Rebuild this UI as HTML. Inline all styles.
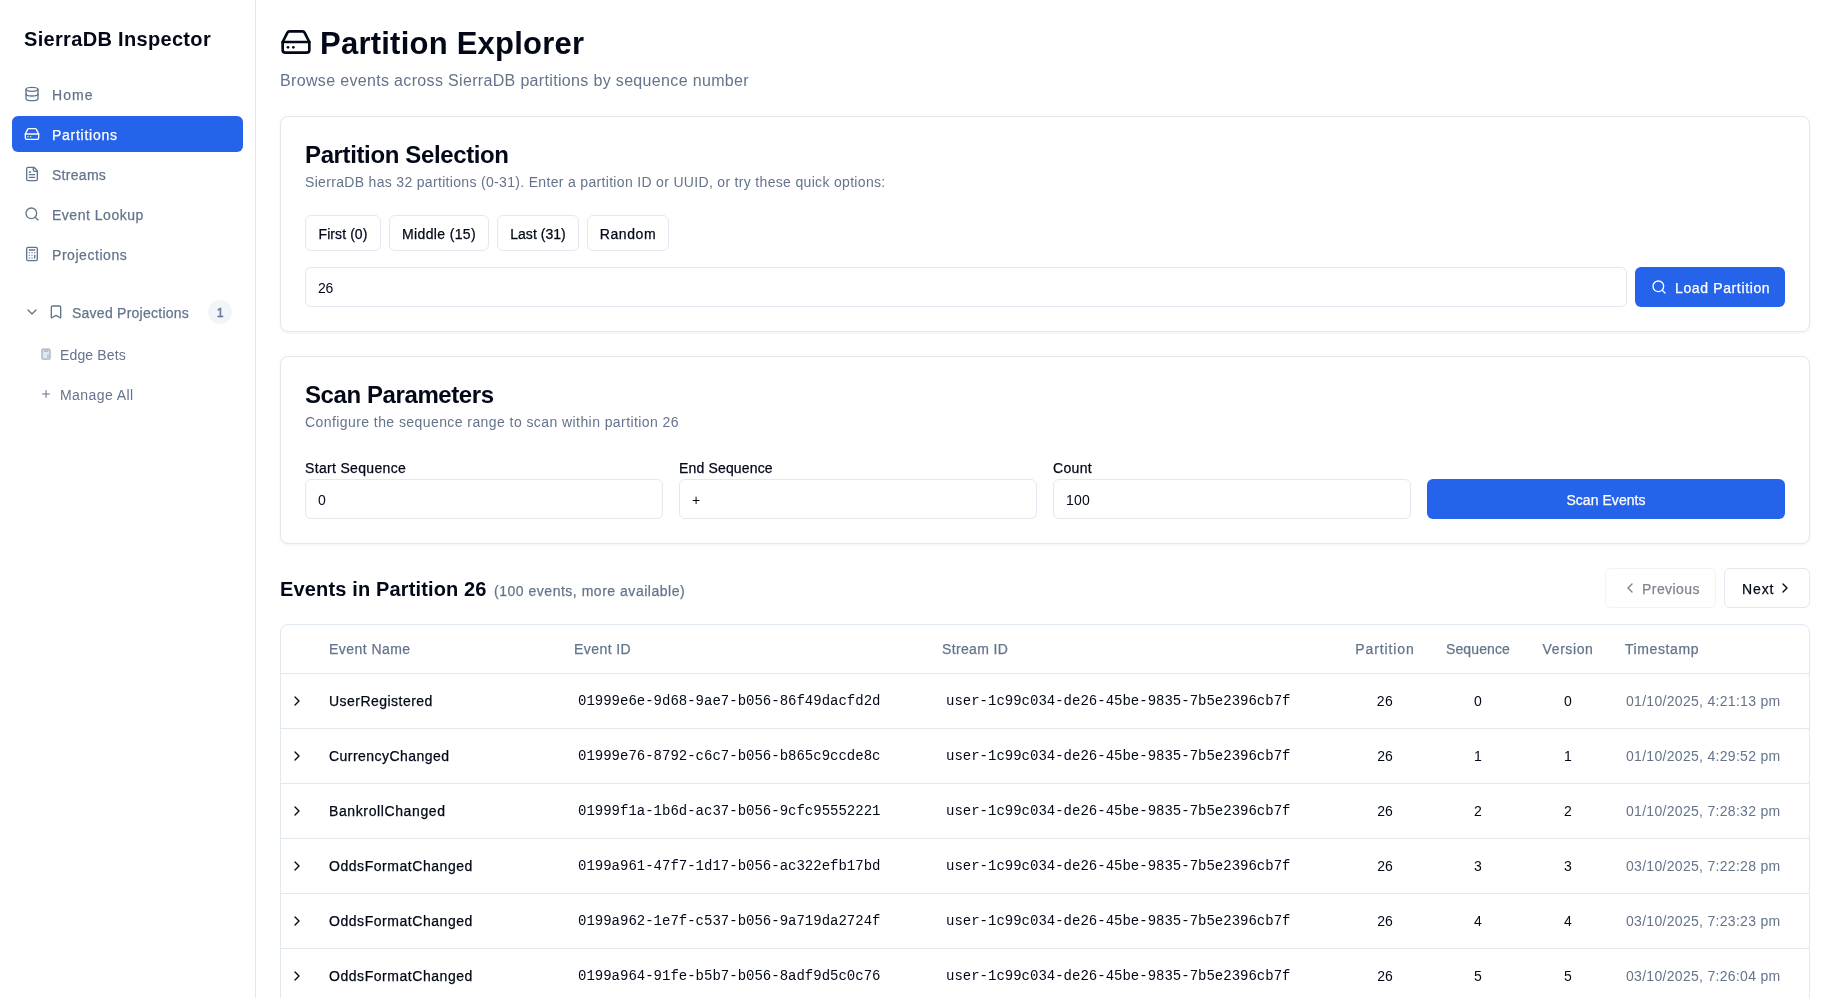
<!DOCTYPE html>
<html>
<head>
<meta charset="utf-8">
<style>
*{box-sizing:border-box;margin:0;padding:0}
html,body{width:1834px;height:998px;overflow:hidden;background:#fff;font-family:"Liberation Sans",sans-serif;color:#020817}
.abs{position:absolute}
svg{display:block}
.tx{position:absolute;white-space:nowrap;will-change:transform}
</style>
</head>
<body>
<div class="abs" style="left:255px;top:0px;width:1px;height:998px;background:#e2e8f0"></div>
<div class="tx" style="font-family:'Liberation Sans',sans-serif;font-size:20px;font-weight:700;color:#020817;line-height:28px;top:25.07px;letter-spacing:0.324px;left:24.00px;"><span id="brand">SierraDB Inspector</span></div>
<svg class="abs" style="left:24px;top:86px" width="16" height="16" viewBox="0 0 24 24" fill="none" stroke="#64748b" stroke-width="2" stroke-linecap="round" stroke-linejoin="round" ><ellipse cx="12" cy="5" rx="9" ry="3"/><path d="M3 5V19A9 3 0 0 0 21 19V5"/><path d="M3 12A9 3 0 0 0 21 12"/></svg>
<div class="tx" style="font-family:'Liberation Sans',sans-serif;font-size:14px;font-weight:400;color:#64748b;line-height:20px;top:85.15px;letter-spacing:1.067px;-webkit-text-stroke:0.25px #64748b;left:52.00px;"><span id="home">Home</span></div>
<div class="abs" style="left:12px;top:116px;width:231px;height:36px;background:#2563eb;border-radius:6px"></div>
<svg class="abs" style="left:24px;top:126px" width="16" height="16" viewBox="0 0 24 24" fill="none" stroke="#fff" stroke-width="2" stroke-linecap="round" stroke-linejoin="round" ><line x1="22" x2="2" y1="12" y2="12"/><path d="M5.45 5.11 2 12v6a2 2 0 0 0 2 2h16a2 2 0 0 0 2-2v-6l-3.45-6.89A2 2 0 0 0 16.76 4H7.24a2 2 0 0 0-1.79 1.11z"/><line x1="6" x2="6.01" y1="16" y2="16"/><line x1="10" x2="10.01" y1="16" y2="16"/></svg>
<div class="tx" style="font-family:'Liberation Sans',sans-serif;font-size:14px;font-weight:400;color:#fff;line-height:20px;top:125.15px;letter-spacing:0.733px;-webkit-text-stroke:0.25px #fff;left:52.00px;"><span id="partitions">Partitions</span></div>
<svg class="abs" style="left:24px;top:166px" width="16" height="16" viewBox="0 0 24 24" fill="none" stroke="#64748b" stroke-width="2" stroke-linecap="round" stroke-linejoin="round" ><path d="M15 2H6a2 2 0 0 0-2 2v16a2 2 0 0 0 2 2h12a2 2 0 0 0 2-2V7Z"/><path d="M14 2v4a2 2 0 0 0 2 2h4"/><path d="M10 9H8"/><path d="M16 13H8"/><path d="M16 17H8"/></svg>
<div class="tx" style="font-family:'Liberation Sans',sans-serif;font-size:14px;font-weight:400;color:#64748b;line-height:20px;top:165.15px;letter-spacing:0.283px;-webkit-text-stroke:0.25px #64748b;left:52.00px;"><span id="streams">Streams</span></div>
<svg class="abs" style="left:24px;top:206px" width="16" height="16" viewBox="0 0 24 24" fill="none" stroke="#64748b" stroke-width="2" stroke-linecap="round" stroke-linejoin="round" ><circle cx="11" cy="11" r="8"/><path d="m21 21-4.3-4.3"/></svg>
<div class="tx" style="font-family:'Liberation Sans',sans-serif;font-size:14px;font-weight:400;color:#64748b;line-height:20px;top:205.15px;letter-spacing:0.518px;-webkit-text-stroke:0.25px #64748b;left:52.00px;"><span id="lookup">Event Lookup</span></div>
<svg class="abs" style="left:24px;top:246px" width="16" height="16" viewBox="0 0 24 24" fill="none" stroke="#64748b" stroke-width="2" stroke-linecap="round" stroke-linejoin="round" ><rect width="16" height="20" x="4" y="2" rx="2"/><line x1="8" x2="16" y1="6" y2="6"/><line x1="16" x2="16" y1="14" y2="18"/><path d="M16 10h.01"/><path d="M12 10h.01"/><path d="M8 10h.01"/><path d="M12 14h.01"/><path d="M8 14h.01"/><path d="M12 18h.01"/><path d="M8 18h.01"/></svg>
<div class="tx" style="font-family:'Liberation Sans',sans-serif;font-size:14px;font-weight:400;color:#64748b;line-height:20px;top:245.15px;letter-spacing:0.550px;-webkit-text-stroke:0.25px #64748b;left:52.00px;"><span id="projections">Projections</span></div>
<svg class="abs" style="left:24px;top:304px" width="16" height="16" viewBox="0 0 24 24" fill="none" stroke="#64748b" stroke-width="2" stroke-linecap="round" stroke-linejoin="round" ><path d="m6 9 6 6 6-6"/></svg>
<svg class="abs" style="left:48px;top:304px" width="16" height="16" viewBox="0 0 24 24" fill="none" stroke="#64748b" stroke-width="2" stroke-linecap="round" stroke-linejoin="round" ><path d="m19 21-7-4-7 4V5a2 2 0 0 1 2-2h10a2 2 0 0 1 2 2v16z"/></svg>
<div class="tx" style="font-family:'Liberation Sans',sans-serif;font-size:14px;font-weight:400;color:#64748b;line-height:20px;top:303.15px;letter-spacing:0.250px;-webkit-text-stroke:0.25px #64748b;left:72.00px;"><span id="saved">Saved Projections</span></div>
<div class="abs" style="left:208px;top:300px;width:24px;height:24px;border-radius:12px;background:#f1f5f9;color:#64748b;font-size:12px;line-height:26px;text-align:center;font-weight:400;-webkit-text-stroke:.4px #64748b">1</div>
<svg class="abs" style="left:40px;top:348px" width="12" height="12" viewBox="0 0 24 24" fill="none" stroke="#a3adbd" stroke-width="2.5" stroke-linecap="round" stroke-linejoin="round" ><rect width="16" height="20" x="4" y="2" rx="2" fill="#e2e8f0"/><line x1="8" x2="16" y1="6" y2="6"/><line x1="16" x2="16" y1="14" y2="18"/></svg>
<div class="tx" style="font-family:'Liberation Sans',sans-serif;font-size:14px;font-weight:400;color:#64748b;line-height:20px;top:345.15px;letter-spacing:0.138px;left:60.00px;"><span id="edge">Edge Bets</span></div>
<svg class="abs" style="left:40px;top:388px" width="12" height="12" viewBox="0 0 24 24" fill="none" stroke="#64748b" stroke-width="2" stroke-linecap="round" stroke-linejoin="round" ><path d="M5 12h14"/><path d="M12 5v14"/></svg>
<div class="tx" style="font-family:'Liberation Sans',sans-serif;font-size:14px;font-weight:400;color:#64748b;line-height:20px;top:385.15px;letter-spacing:0.422px;left:60.00px;"><span id="manage">Manage All</span></div>
<svg class="abs" style="left:280px;top:26px" width="32" height="32" viewBox="0 0 24 24" fill="none" stroke="#020817" stroke-width="2" stroke-linecap="round" stroke-linejoin="round" ><line x1="22" x2="2" y1="12" y2="12"/><path d="M5.45 5.11 2 12v6a2 2 0 0 0 2 2h16a2 2 0 0 0 2-2v-6l-3.45-6.89A2 2 0 0 0 16.76 4H7.24a2 2 0 0 0-1.79 1.11z"/><line x1="6" x2="6.01" y1="16" y2="16"/><line x1="10" x2="10.01" y1="16" y2="16"/></svg>
<div class="tx" style="font-family:'Liberation Sans',sans-serif;font-size:31px;font-weight:700;color:#020817;line-height:43px;top:21.66px;letter-spacing:0.235px;left:320.00px;"><span id="title">Partition Explorer</span></div>
<div class="tx" style="font-family:'Liberation Sans',sans-serif;font-size:16px;font-weight:400;color:#64748b;line-height:22px;top:70.26px;letter-spacing:0.336px;left:280.00px;"><span id="subtitle">Browse events across SierraDB partitions by sequence number</span></div>
<div class="abs" style="left:280px;top:116px;width:1530px;height:216px;border:1px solid #e2e8f0;border-radius:8px;background:#fff;box-shadow:0 1px 3px 0 rgba(0,0,0,.06)"></div>
<div class="tx" style="font-family:'Liberation Sans',sans-serif;font-size:24px;font-weight:700;color:#020817;line-height:34px;top:137.88px;letter-spacing:-0.372px;left:305.00px;"><span id="h2a">Partition Selection</span></div>
<div class="tx" style="font-family:'Liberation Sans',sans-serif;font-size:14px;font-weight:400;color:#64748b;line-height:20px;top:172.25px;letter-spacing:0.322px;left:305.00px;"><span id="desc1">SierraDB has 32 partitions (0-31). Enter a partition ID or UUID, or try these quick options:</span></div>
<div class="abs" style="left:305px;top:215px;width:76px;height:36px;border:1px solid #e2e8f0;border-radius:6px;background:#fff"></div>
<div class="tx" style="font-family:'Liberation Sans',sans-serif;font-size:14px;font-weight:400;color:#020817;line-height:20px;top:224.15px;letter-spacing:0.087px;-webkit-text-stroke:0.25px #020817;left:285.04px;width:116px;text-align:center;"><span id="b1">First (0)</span></div>
<div class="abs" style="left:389px;top:215px;width:100px;height:36px;border:1px solid #e2e8f0;border-radius:6px;background:#fff"></div>
<div class="tx" style="font-family:'Liberation Sans',sans-serif;font-size:14px;font-weight:400;color:#020817;line-height:20px;top:224.15px;letter-spacing:0.350px;-webkit-text-stroke:0.25px #020817;left:369.18px;width:140px;text-align:center;"><span id="b2">Middle (15)</span></div>
<div class="abs" style="left:497px;top:215px;width:82px;height:36px;border:1px solid #e2e8f0;border-radius:6px;background:#fff"></div>
<div class="tx" style="font-family:'Liberation Sans',sans-serif;font-size:14px;font-weight:400;color:#020817;line-height:20px;top:224.15px;letter-spacing:0.038px;-webkit-text-stroke:0.25px #020817;left:477.02px;width:122px;text-align:center;"><span id="b3">Last (31)</span></div>
<div class="abs" style="left:587px;top:215px;width:82px;height:36px;border:1px solid #e2e8f0;border-radius:6px;background:#fff"></div>
<div class="tx" style="font-family:'Liberation Sans',sans-serif;font-size:14px;font-weight:400;color:#020817;line-height:20px;top:224.15px;letter-spacing:0.580px;-webkit-text-stroke:0.25px #020817;left:567.29px;width:122px;text-align:center;"><span id="b4">Random</span></div>
<div class="abs" style="left:305px;top:267px;width:1322px;height:40px;border:1px solid #e2e8f0;border-radius:6px;background:#fff"></div>
<div class="tx" style="font-family:'Liberation Sans',sans-serif;font-size:14px;font-weight:400;color:#020817;line-height:20px;top:278.05px;letter-spacing:-0.400px;left:318.00px;"><span id="inp26">26</span></div>
<div class="abs" style="left:1635px;top:267px;width:150px;height:40px;background:#2563eb;border-radius:6px"></div>
<svg class="abs" style="left:1651px;top:279px" width="16" height="16" viewBox="0 0 24 24" fill="none" stroke="#fff" stroke-width="2" stroke-linecap="round" stroke-linejoin="round" ><circle cx="11" cy="11" r="8"/><path d="m21 21-4.3-4.3"/></svg>
<div class="tx" style="font-family:'Liberation Sans',sans-serif;font-size:14px;font-weight:400;color:#fff;line-height:20px;top:278.25px;letter-spacing:0.631px;-webkit-text-stroke:0.25px #fff;left:1675.00px;"><span id="load">Load Partition</span></div>
<div class="abs" style="left:280px;top:356px;width:1530px;height:188px;border:1px solid #e2e8f0;border-radius:8px;background:#fff;box-shadow:0 1px 3px 0 rgba(0,0,0,.06)"></div>
<div class="tx" style="font-family:'Liberation Sans',sans-serif;font-size:24px;font-weight:700;color:#020817;line-height:34px;top:378.08px;letter-spacing:-0.407px;left:305.00px;"><span id="h2b">Scan Parameters</span></div>
<div class="tx" style="font-family:'Liberation Sans',sans-serif;font-size:14px;font-weight:400;color:#64748b;line-height:20px;top:412.35px;letter-spacing:0.425px;left:305.00px;"><span id="desc2">Configure the sequence range to scan within partition 26</span></div>
<div class="tx" style="font-family:'Liberation Sans',sans-serif;font-size:14px;font-weight:400;color:#020817;line-height:20px;top:458.35px;letter-spacing:0.331px;-webkit-text-stroke:0.25px #020817;left:305.00px;"><span id="l1">Start Sequence</span></div>
<div class="tx" style="font-family:'Liberation Sans',sans-serif;font-size:14px;font-weight:400;color:#020817;line-height:20px;top:458.35px;letter-spacing:0.164px;-webkit-text-stroke:0.25px #020817;left:679.00px;"><span id="l2">End Sequence</span></div>
<div class="tx" style="font-family:'Liberation Sans',sans-serif;font-size:14px;font-weight:400;color:#020817;line-height:20px;top:458.35px;letter-spacing:0.325px;-webkit-text-stroke:0.25px #020817;left:1053.00px;"><span id="l3">Count</span></div>
<div class="abs" style="left:305px;top:479px;width:358px;height:40px;border:1px solid #e2e8f0;border-radius:6px;background:#fff"></div>
<div class="tx" style="font-family:'Liberation Sans',sans-serif;font-size:14px;font-weight:400;color:#020817;line-height:20px;top:490.45px;left:318.00px;"><span id="v0">0</span></div>
<div class="abs" style="left:679px;top:479px;width:358px;height:40px;border:1px solid #e2e8f0;border-radius:6px;background:#fff"></div>
<div class="tx" style="font-family:'Liberation Sans',sans-serif;font-size:14px;font-weight:400;color:#020817;line-height:20px;top:490.45px;left:692.00px;"><span id="vplus">+</span></div>
<div class="abs" style="left:1053px;top:479px;width:358px;height:40px;border:1px solid #e2e8f0;border-radius:6px;background:#fff"></div>
<div class="tx" style="font-family:'Liberation Sans',sans-serif;font-size:14px;font-weight:400;color:#020817;line-height:20px;top:490.45px;letter-spacing:0.200px;left:1066.00px;"><span id="v100">100</span></div>
<div class="abs" style="left:1427px;top:479px;width:358px;height:40px;background:#2563eb;border-radius:6px"></div>
<div class="tx" style="font-family:'Liberation Sans',sans-serif;font-size:14px;font-weight:400;color:#fff;line-height:20px;top:490.15px;letter-spacing:0.050px;-webkit-text-stroke:0.25px #fff;left:1456.03px;width:300px;text-align:center;"><span id="scan">Scan Events</span></div>
<div class="tx" style="font-family:'Liberation Sans',sans-serif;font-size:20px;font-weight:700;color:#020817;line-height:28px;top:574.97px;letter-spacing:0.148px;left:280.00px;"><span id="events">Events in Partition 26</span></div>
<div class="tx" style="font-family:'Liberation Sans',sans-serif;font-size:14px;font-weight:400;color:#64748b;line-height:20px;top:581.15px;letter-spacing:0.519px;-webkit-text-stroke:0.25px #64748b;left:494.00px;"><span id="evcount">(100 events, more available)</span></div>
<div class="abs" style="left:1605px;top:568px;width:111px;height:40px;opacity:.5">
<div class="abs" style="left:0px;top:0px;width:111px;height:40px;border:1px solid #e2e8f0;border-radius:6px;background:#fff"></div>
<svg class="abs" style="left:17px;top:12px" width="16" height="16" viewBox="0 0 24 24" fill="none" stroke="#020817" stroke-width="2" stroke-linecap="round" stroke-linejoin="round" ><path d="m15 18-6-6 6-6"/></svg>
</div>
<div class="tx" style="font-family:'Liberation Sans',sans-serif;font-size:14px;font-weight:400;color:#808490;line-height:20px;top:579.35px;letter-spacing:0.443px;-webkit-text-stroke:0.25px #808490;left:1641.50px;"><span id="prev">Previous</span></div>
<div class="abs" style="left:1724px;top:568px;width:86px;height:40px;border:1px solid #e2e8f0;border-radius:6px;background:#fff"></div>
<div class="tx" style="font-family:'Liberation Sans',sans-serif;font-size:14px;font-weight:400;color:#020817;line-height:20px;top:579.35px;letter-spacing:0.900px;-webkit-text-stroke:0.25px #020817;left:1742.00px;"><span id="next">Next</span></div>
<svg class="abs" style="left:1777px;top:580px" width="16" height="16" viewBox="0 0 24 24" fill="none" stroke="#020817" stroke-width="2" stroke-linecap="round" stroke-linejoin="round" ><path d="m9 18 6-6-6-6"/></svg>
<div class="abs" style="left:280px;top:624px;width:1530px;height:400px;border:1px solid #e2e8f0;border-radius:8px;background:#fff"></div>
<div class="tx" style="font-family:'Liberation Sans',sans-serif;font-size:14px;font-weight:400;color:#64748b;line-height:20px;top:639.15px;letter-spacing:0.456px;-webkit-text-stroke:0.25px #64748b;left:329.00px;"><span id="th_name">Event Name</span></div>
<div class="tx" style="font-family:'Liberation Sans',sans-serif;font-size:14px;font-weight:400;color:#64748b;line-height:20px;top:639.15px;letter-spacing:0.429px;-webkit-text-stroke:0.25px #64748b;left:574.00px;"><span id="th_id">Event ID</span></div>
<div class="tx" style="font-family:'Liberation Sans',sans-serif;font-size:14px;font-weight:400;color:#64748b;line-height:20px;top:639.15px;letter-spacing:0.350px;-webkit-text-stroke:0.25px #64748b;left:942.00px;"><span id="th_stream">Stream ID</span></div>
<div class="tx" style="font-family:'Liberation Sans',sans-serif;font-size:14px;font-weight:400;color:#64748b;line-height:20px;top:639.15px;letter-spacing:0.912px;-webkit-text-stroke:0.25px #64748b;left:1325.36px;width:120px;text-align:center;"><span id="th_part">Partition</span></div>
<div class="tx" style="font-family:'Liberation Sans',sans-serif;font-size:14px;font-weight:400;color:#64748b;line-height:20px;top:639.15px;letter-spacing:0.114px;-webkit-text-stroke:0.25px #64748b;left:1418.46px;width:120px;text-align:center;"><span id="th_seq">Sequence</span></div>
<div class="tx" style="font-family:'Liberation Sans',sans-serif;font-size:14px;font-weight:400;color:#64748b;line-height:20px;top:639.15px;letter-spacing:0.583px;-webkit-text-stroke:0.25px #64748b;left:1508.09px;width:120px;text-align:center;"><span id="th_ver">Version</span></div>
<div class="tx" style="font-family:'Liberation Sans',sans-serif;font-size:14px;font-weight:400;color:#64748b;line-height:20px;top:639.15px;letter-spacing:0.588px;-webkit-text-stroke:0.25px #64748b;left:1625.00px;"><span id="th_ts">Timestamp</span></div>
<div class="abs" style="left:281px;top:673px;width:1528px;height:1px;background:#e2e8f0"></div>
<svg class="abs" style="left:289px;top:693px" width="16" height="16" viewBox="0 0 24 24" fill="none" stroke="#020817" stroke-width="2" stroke-linecap="round" stroke-linejoin="round" ><path d="m9 18 6-6-6-6"/></svg>
<div class="tx" style="font-family:'Liberation Sans',sans-serif;font-size:14px;font-weight:400;color:#020817;line-height:20px;top:690.85px;letter-spacing:0.469px;-webkit-text-stroke:0.25px #020817;left:329.00px;"><span id="r0name">UserRegistered</span></div>
<div class="tx" style="font-family:'Liberation Mono',monospace;font-size:14px;font-weight:400;color:#020817;line-height:20px;top:690.85px;left:578.00px;"><span id="r0id">01999e6e-9d68-9ae7-b056-86f49dacfd2d</span></div>
<div class="tx" style="font-family:'Liberation Mono',monospace;font-size:14px;font-weight:400;color:#020817;line-height:20px;top:690.85px;left:946.00px;"><span id="r0sid">user-1c99c034-de26-45be-9835-7b5e2396cb7f</span></div>
<div class="tx" style="font-family:'Liberation Sans',sans-serif;font-size:14px;font-weight:400;color:#020817;line-height:20px;top:690.85px;letter-spacing:0.500px;left:1324.75px;width:120px;text-align:center;"><span id="r0p">26</span></div>
<div class="tx" style="font-family:'Liberation Sans',sans-serif;font-size:14px;font-weight:400;color:#020817;line-height:20px;top:690.85px;left:1418.30px;width:120px;text-align:center;"><span id="r0s">0</span></div>
<div class="tx" style="font-family:'Liberation Sans',sans-serif;font-size:14px;font-weight:400;color:#020817;line-height:20px;top:690.85px;left:1507.80px;width:120px;text-align:center;"><span id="r0v">0</span></div>
<div class="tx" style="font-family:'Liberation Sans',sans-serif;font-size:14px;font-weight:400;color:#64748b;line-height:20px;top:690.85px;letter-spacing:0.300px;left:1625.50px;"><span id="r0ts">01/10/2025, 4:21:13 pm</span></div>
<div class="abs" style="left:281px;top:728px;width:1528px;height:1px;background:#e2e8f0"></div>
<svg class="abs" style="left:289px;top:748px" width="16" height="16" viewBox="0 0 24 24" fill="none" stroke="#020817" stroke-width="2" stroke-linecap="round" stroke-linejoin="round" ><path d="m9 18 6-6-6-6"/></svg>
<div class="tx" style="font-family:'Liberation Sans',sans-serif;font-size:14px;font-weight:400;color:#020817;line-height:20px;top:745.85px;letter-spacing:0.457px;-webkit-text-stroke:0.25px #020817;left:329.00px;"><span id="r1name">CurrencyChanged</span></div>
<div class="tx" style="font-family:'Liberation Mono',monospace;font-size:14px;font-weight:400;color:#020817;line-height:20px;top:745.85px;left:578.00px;"><span id="r1id">01999e76-8792-c6c7-b056-b865c9ccde8c</span></div>
<div class="tx" style="font-family:'Liberation Mono',monospace;font-size:14px;font-weight:400;color:#020817;line-height:20px;top:745.85px;left:946.00px;"><span id="r1sid">user-1c99c034-de26-45be-9835-7b5e2396cb7f</span></div>
<div class="tx" style="font-family:'Liberation Sans',sans-serif;font-size:14px;font-weight:400;color:#020817;line-height:20px;top:745.85px;left:1324.50px;width:120px;text-align:center;"><span id="r1p">26</span></div>
<div class="tx" style="font-family:'Liberation Sans',sans-serif;font-size:14px;font-weight:400;color:#020817;line-height:20px;top:745.85px;left:1418.30px;width:120px;text-align:center;"><span id="r1s">1</span></div>
<div class="tx" style="font-family:'Liberation Sans',sans-serif;font-size:14px;font-weight:400;color:#020817;line-height:20px;top:745.85px;left:1507.80px;width:120px;text-align:center;"><span id="r1v">1</span></div>
<div class="tx" style="font-family:'Liberation Sans',sans-serif;font-size:14px;font-weight:400;color:#64748b;line-height:20px;top:745.85px;letter-spacing:0.300px;left:1625.50px;"><span id="r1ts">01/10/2025, 4:29:52 pm</span></div>
<div class="abs" style="left:281px;top:783px;width:1528px;height:1px;background:#e2e8f0"></div>
<svg class="abs" style="left:289px;top:803px" width="16" height="16" viewBox="0 0 24 24" fill="none" stroke="#020817" stroke-width="2" stroke-linecap="round" stroke-linejoin="round" ><path d="m9 18 6-6-6-6"/></svg>
<div class="tx" style="font-family:'Liberation Sans',sans-serif;font-size:14px;font-weight:400;color:#020817;line-height:20px;top:800.85px;letter-spacing:0.614px;-webkit-text-stroke:0.25px #020817;left:329.00px;"><span id="r2name">BankrollChanged</span></div>
<div class="tx" style="font-family:'Liberation Mono',monospace;font-size:14px;font-weight:400;color:#020817;line-height:20px;top:800.85px;left:578.00px;"><span id="r2id">01999f1a-1b6d-ac37-b056-9cfc95552221</span></div>
<div class="tx" style="font-family:'Liberation Mono',monospace;font-size:14px;font-weight:400;color:#020817;line-height:20px;top:800.85px;left:946.00px;"><span id="r2sid">user-1c99c034-de26-45be-9835-7b5e2396cb7f</span></div>
<div class="tx" style="font-family:'Liberation Sans',sans-serif;font-size:14px;font-weight:400;color:#020817;line-height:20px;top:800.85px;left:1324.50px;width:120px;text-align:center;"><span id="r2p">26</span></div>
<div class="tx" style="font-family:'Liberation Sans',sans-serif;font-size:14px;font-weight:400;color:#020817;line-height:20px;top:800.85px;left:1418.30px;width:120px;text-align:center;"><span id="r2s">2</span></div>
<div class="tx" style="font-family:'Liberation Sans',sans-serif;font-size:14px;font-weight:400;color:#020817;line-height:20px;top:800.85px;left:1507.80px;width:120px;text-align:center;"><span id="r2v">2</span></div>
<div class="tx" style="font-family:'Liberation Sans',sans-serif;font-size:14px;font-weight:400;color:#64748b;line-height:20px;top:800.85px;letter-spacing:0.300px;left:1625.50px;"><span id="r2ts">01/10/2025, 7:28:32 pm</span></div>
<div class="abs" style="left:281px;top:838px;width:1528px;height:1px;background:#e2e8f0"></div>
<svg class="abs" style="left:289px;top:858px" width="16" height="16" viewBox="0 0 24 24" fill="none" stroke="#020817" stroke-width="2" stroke-linecap="round" stroke-linejoin="round" ><path d="m9 18 6-6-6-6"/></svg>
<div class="tx" style="font-family:'Liberation Sans',sans-serif;font-size:14px;font-weight:400;color:#020817;line-height:20px;top:855.85px;letter-spacing:0.544px;-webkit-text-stroke:0.25px #020817;left:329.00px;"><span id="r3name">OddsFormatChanged</span></div>
<div class="tx" style="font-family:'Liberation Mono',monospace;font-size:14px;font-weight:400;color:#020817;line-height:20px;top:855.85px;left:578.00px;"><span id="r3id">0199a961-47f7-1d17-b056-ac322efb17bd</span></div>
<div class="tx" style="font-family:'Liberation Mono',monospace;font-size:14px;font-weight:400;color:#020817;line-height:20px;top:855.85px;left:946.00px;"><span id="r3sid">user-1c99c034-de26-45be-9835-7b5e2396cb7f</span></div>
<div class="tx" style="font-family:'Liberation Sans',sans-serif;font-size:14px;font-weight:400;color:#020817;line-height:20px;top:855.85px;left:1324.50px;width:120px;text-align:center;"><span id="r3p">26</span></div>
<div class="tx" style="font-family:'Liberation Sans',sans-serif;font-size:14px;font-weight:400;color:#020817;line-height:20px;top:855.85px;left:1418.30px;width:120px;text-align:center;"><span id="r3s">3</span></div>
<div class="tx" style="font-family:'Liberation Sans',sans-serif;font-size:14px;font-weight:400;color:#020817;line-height:20px;top:855.85px;left:1507.80px;width:120px;text-align:center;"><span id="r3v">3</span></div>
<div class="tx" style="font-family:'Liberation Sans',sans-serif;font-size:14px;font-weight:400;color:#64748b;line-height:20px;top:855.85px;letter-spacing:0.300px;left:1625.50px;"><span id="r3ts">03/10/2025, 7:22:28 pm</span></div>
<div class="abs" style="left:281px;top:893px;width:1528px;height:1px;background:#e2e8f0"></div>
<svg class="abs" style="left:289px;top:913px" width="16" height="16" viewBox="0 0 24 24" fill="none" stroke="#020817" stroke-width="2" stroke-linecap="round" stroke-linejoin="round" ><path d="m9 18 6-6-6-6"/></svg>
<div class="tx" style="font-family:'Liberation Sans',sans-serif;font-size:14px;font-weight:400;color:#020817;line-height:20px;top:910.85px;letter-spacing:0.544px;-webkit-text-stroke:0.25px #020817;left:329.00px;"><span id="r4name">OddsFormatChanged</span></div>
<div class="tx" style="font-family:'Liberation Mono',monospace;font-size:14px;font-weight:400;color:#020817;line-height:20px;top:910.85px;left:578.00px;"><span id="r4id">0199a962-1e7f-c537-b056-9a719da2724f</span></div>
<div class="tx" style="font-family:'Liberation Mono',monospace;font-size:14px;font-weight:400;color:#020817;line-height:20px;top:910.85px;left:946.00px;"><span id="r4sid">user-1c99c034-de26-45be-9835-7b5e2396cb7f</span></div>
<div class="tx" style="font-family:'Liberation Sans',sans-serif;font-size:14px;font-weight:400;color:#020817;line-height:20px;top:910.85px;left:1324.50px;width:120px;text-align:center;"><span id="r4p">26</span></div>
<div class="tx" style="font-family:'Liberation Sans',sans-serif;font-size:14px;font-weight:400;color:#020817;line-height:20px;top:910.85px;left:1418.30px;width:120px;text-align:center;"><span id="r4s">4</span></div>
<div class="tx" style="font-family:'Liberation Sans',sans-serif;font-size:14px;font-weight:400;color:#020817;line-height:20px;top:910.85px;left:1507.80px;width:120px;text-align:center;"><span id="r4v">4</span></div>
<div class="tx" style="font-family:'Liberation Sans',sans-serif;font-size:14px;font-weight:400;color:#64748b;line-height:20px;top:910.85px;letter-spacing:0.300px;left:1625.50px;"><span id="r4ts">03/10/2025, 7:23:23 pm</span></div>
<div class="abs" style="left:281px;top:948px;width:1528px;height:1px;background:#e2e8f0"></div>
<svg class="abs" style="left:289px;top:968px" width="16" height="16" viewBox="0 0 24 24" fill="none" stroke="#020817" stroke-width="2" stroke-linecap="round" stroke-linejoin="round" ><path d="m9 18 6-6-6-6"/></svg>
<div class="tx" style="font-family:'Liberation Sans',sans-serif;font-size:14px;font-weight:400;color:#020817;line-height:20px;top:965.85px;letter-spacing:0.544px;-webkit-text-stroke:0.25px #020817;left:329.00px;"><span id="r5name">OddsFormatChanged</span></div>
<div class="tx" style="font-family:'Liberation Mono',monospace;font-size:14px;font-weight:400;color:#020817;line-height:20px;top:965.85px;left:578.00px;"><span id="r5id">0199a964-91fe-b5b7-b056-8adf9d5c0c76</span></div>
<div class="tx" style="font-family:'Liberation Mono',monospace;font-size:14px;font-weight:400;color:#020817;line-height:20px;top:965.85px;left:946.00px;"><span id="r5sid">user-1c99c034-de26-45be-9835-7b5e2396cb7f</span></div>
<div class="tx" style="font-family:'Liberation Sans',sans-serif;font-size:14px;font-weight:400;color:#020817;line-height:20px;top:965.85px;left:1324.50px;width:120px;text-align:center;"><span id="r5p">26</span></div>
<div class="tx" style="font-family:'Liberation Sans',sans-serif;font-size:14px;font-weight:400;color:#020817;line-height:20px;top:965.85px;left:1418.30px;width:120px;text-align:center;"><span id="r5s">5</span></div>
<div class="tx" style="font-family:'Liberation Sans',sans-serif;font-size:14px;font-weight:400;color:#020817;line-height:20px;top:965.85px;left:1507.80px;width:120px;text-align:center;"><span id="r5v">5</span></div>
<div class="tx" style="font-family:'Liberation Sans',sans-serif;font-size:14px;font-weight:400;color:#64748b;line-height:20px;top:965.85px;letter-spacing:0.300px;left:1625.50px;"><span id="r5ts">03/10/2025, 7:26:04 pm</span></div>
<div class="abs" style="left:281px;top:1003px;width:1528px;height:1px;background:#e2e8f0"></div>
</body>
</html>
